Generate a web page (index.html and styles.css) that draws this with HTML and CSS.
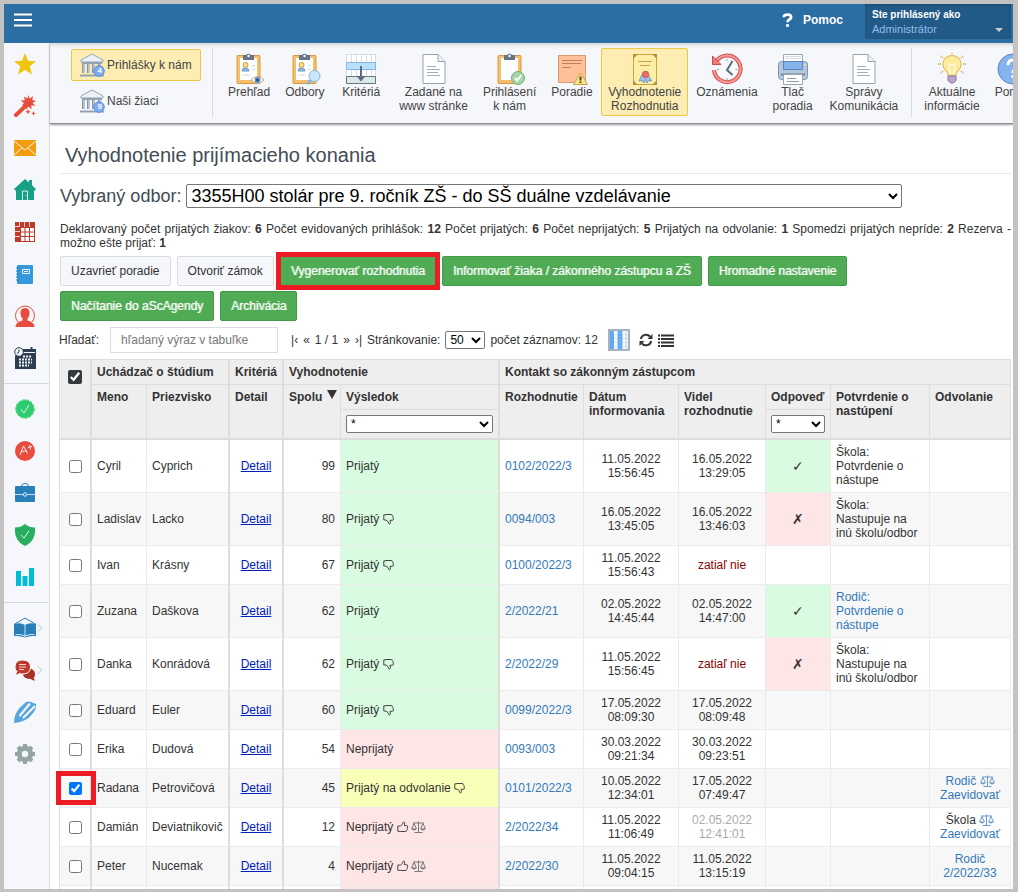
FILE: index.html
```html
<!DOCTYPE html>
<html lang="sk">
<head>
<meta charset="utf-8">
<title>Vyhodnotenie prijímacieho konania</title>
<link rel="stylesheet" href="styles.css">
</head>
<body>
<svg class="defs" aria-hidden="true">
  <symbol id="bank" viewBox="0 0 26 24">
    <path d="M2 7 13 1l11 6v2H2z" fill="#eef2f6" stroke="#93a3b4"/>
    <path d="M3 10h20" stroke="#93a3b4" stroke-width="2"/>
    <path d="M4.500 11v9M9.500 11v9M14.500 11v9M20.500 11v9" stroke="#8598ab" stroke-width="3"/>
    <path d="M5 11v9M10 11v9M15 11v9M21 11v9" stroke="#e9eef3"/>
    <path d="M1 22.500h24" stroke="#93a3b4" stroke-width="2"/>
    <circle cx="20" cy="18" r="5.300" fill="#7daaf0" stroke="#5d8fd8"/>
  </symbol>
  <symbol id="doc" viewBox="0 0 32 32">
    <path d="M5 1.500h15l7 7v22H5z" fill="#fff" stroke="#94a3b3"/>
    <path d="M20 1.500v7h7" fill="#eef2f6" stroke="#94a3b3"/>
    <path d="M9 13.500h9M9 16.500h13M9 19.500h11M9 22.500h13" stroke="#a3acbb"/>
  </symbol>
  <symbol id="clip" viewBox="0 0 32 32">
    <rect x="4" y="2.500" width="23" height="28" rx="1" fill="#f5c06c" stroke="#d9973f"/>
    <path d="M7 5h17v22H7z" fill="#fff"/>
    <path d="M10 2h3a3 3 0 0 1 5 0h3v5H10z" fill="#667587"/>
    <circle cx="15.500" cy="3" r="1.200" fill="#fff"/>
  </symbol>
  <symbol id="person" viewBox="0 0 32 32">
    <circle cx="12.500" cy="12" r="2.500" fill="#fbe08b" stroke="#c99d3e"/>
    <path d="M9 18q0-3 3.500-3t3.500 3z" fill="#8fb9e6" stroke="#6f97c4"/>
    <path d="M19 12.500h3M19 16.500h3M9 22h8" stroke="#d5dde5"/>
  </symbol>
  <symbol id="down" viewBox="0 0 12 12">
    <path d="M3 1.500h5.200q1.300 0 1.200 1.200.9.500.5 1.500.9.700.3 1.700.7 1.300-.9 1.400H7q.7 2.200.2 3.200-.8.900-1.400.1Q5.700 8.500 3 7H.8V1.800H3z" fill="none" stroke="#444"/>
  </symbol>
  <symbol id="up" viewBox="0 0 12 12">
    <path d="M3.500 10.500h5q1.300 0 1.200-1.200.9-.5.5-1.500.9-.7.3-1.700.7-1.300-.9-1.400H7.300q.7-2.200.2-3.200-.8-.9-1.400-.1Q6 3.500 3.500 5H.8v5.300h2.700z" fill="none" stroke="#444"/>
  </symbol>
  <symbol id="scales" viewBox="0 0 15 12">
    <path d="M2 2h11M7.500.500v10.500M3.500 11.500h8M.500 8 3 2.500 5.500 8M9.500 8 12 2.500 14.500 8" fill="none" stroke="currentColor"/>
    <path d="M.300 7.500h5.400Q5 9.500 3 9.500T.300 7.500zM9.300 7.500h5.400Q14 9.500 12 9.500T9.300 7.500z" fill="currentColor"/>
  </symbol>
</svg>

<div class="app">
  <header class="topbar">
    <button class="menu" type="button" aria-label="Menu"><svg width="18" height="14" viewBox="0 0 18 14"><path d="M0 1.500h18M0 7h18M0 12.500h18" stroke="#fff" stroke-width="2"/></svg></button>
    <a class="help" href="#"><svg width="11" height="14" viewBox="0 0 12 15"><path d="M2 4.500Q2 1.500 6 1.500t4 3Q10 6 8 7T6 10" fill="none" stroke="#fff" stroke-width="3"/><path d="M4.500 12h3v3h-3z" fill="#fff"/></svg>Pomoc</a>
    <button class="account" type="button"><strong>Ste prihlásený ako</strong><span>Administrátor</span><i class="caret"></i></button>
  </header>

  <div class="body">
    <nav class="side" aria-label="Moduly">
      <a href="#" aria-label="Obľúbené"><svg viewBox="0 0 22 22"><path d="M11 0l3 7.800 8 .5-6.200 5 2.200 8.200-7-4.600-7 4.600 2.200-8.200L0 8.300l8-.5z" fill="#f1c40f"/></svg></a>
      <a href="#" aria-label="Sprievodca"><svg viewBox="0 0 22 22"><path d="M2 20 12 10.500" stroke="#e74c3c" stroke-width="4" stroke-linecap="round"/><path d="M14.500 0l1.200 3.800L19 1l-.7 4 3.700 1-3.500 2 3 3-4.200-.8.200 4.300-3-3-2.500 3-.2-4.200-4 .2L10 8 6.500 5.500l4.300-.2L10 1.500l3.300 2z" fill="#e74c3c"/><path d="m14 14 .8 2 2 .8-2 .8-.8 2-.8-2-2-.8 2-.8zM19.500 16l.6 1.700 1.700.7-1.700.7-.6 1.700-.6-1.700-1.700-.7 1.700-.7z" fill="#e74c3c"/></svg></a>
      <a href="#" aria-label="Správy"><svg viewBox="0 0 22 22"><path d="M0 3h22v16H0z" fill="#f39c12"/><path d="M0 4l11 9 11-9M0 18l8-7M22 18l-8-7" fill="none" stroke="#fff6e0"/></svg></a>
      <a href="#" aria-label="Domov"><svg viewBox="0 0 22 22"><path d="M0 10 11 0l4 3.600V1h3v5.300L22 10l-1 1.500h-1V21H2V11.500H1z" fill="#16a085"/><path d="M8.500 21v-9h5v9M12 16v1" fill="none" stroke="#d9f2ec"/></svg></a>
      <a href="#" aria-label="Rozvrh"><svg viewBox="0 0 22 22"><path d="M1 1h20v20H1z" fill="#c0392b"/><path d="M6 6h15v15H6z" fill="#fff"/><path d="M6 6.500h15M6 11h15M6 15.500h15M6 20.500h15M6.500 6v15M11 6v15M15.500 6v15M20.500 6v15" stroke="#c0392b"/><path d="M5.500 1v5M10.500 1v5M15.500 1v5M1 5.500h5M1 10.500h5M1 15.500h5" stroke="#f1c8c4"/></svg></a>
      <a href="#" aria-label="Triedna kniha"><svg viewBox="0 0 22 22"><rect x="3" y="2" width="16" height="19" rx="1" fill="#3498db"/><path d="M2 5h3M2 8h3M2 11h3M2 14h3M2 17h3" stroke="#2980b9"/><path d="M8.500 6.500h7v4h-7zM10 8.500h4" fill="none" stroke="#eaf5fc"/></svg></a>
      <a href="#" aria-label="Používatelia"><svg viewBox="0 0 22 22"><path d="M4 17A9.500 9.500 0 1 1 18 17" fill="none" stroke="#e74c3c"/><path d="M11 3q5 0 4.500 6-.5 3-2 4.500v2q7 1.500 7 6.500h-19q0-5 7-6.500v-2Q7 12 6.500 9 6 3 11 3z" fill="#e74c3c"/></svg></a>
      <a href="#" aria-label="Kalendár"><svg viewBox="0 0 22 22"><path d="M8 2h14v20H1V9z" fill="#2c3e50"/><path d="M9 5.500h12" stroke="#f5f7fa"/><path d="M17.500 0v4" stroke="#2c3e50" stroke-width="2"/><circle cx="5" cy="5" r="4.300" fill="#f5f7fa" stroke="#2c3e50"/><path d="M5 2.500V5L3 6.500" fill="none" stroke="#2c3e50"/><path d="M9 9.500h9M5 12.500h13M5 15.500h13M5 18.500h10" stroke="#eef1f4" stroke-width="2" stroke-dasharray="2 1"/></svg></a>
      <hr>
      <a href="#" aria-label="Dochádzka"><svg viewBox="0 0 22 22"><circle cx="11" cy="11" r="9" fill="#2ecc71"/><circle cx="11" cy="11" r="9.200" fill="none" stroke="#2ecc71" stroke-dasharray="3 1"/><path d="m7 11.500 3 3.500 5-8" fill="none" stroke="#eafbf1"/></svg></a>
      <a href="#" aria-label="Známky"><svg viewBox="0 0 22 22"><circle cx="11" cy="11" r="10" fill="#e74c3c"/><path d="m6 15 3.500-9 4 7.500M7 12l6-1.500M14 7.500l4-1M15.500 5l1 4.500" fill="none" stroke="#fde8e5"/></svg></a>
      <a href="#" aria-label="Agenda"><svg viewBox="0 0 22 22"><path d="M7.500 4q0-2.500 3.500-2.500T14.500 4" fill="none" stroke="#2980b9"/><rect x="1" y="4" width="20" height="16" rx="1" fill="#2980b9"/><path d="M1 12.500h8M13 12.500h8" stroke="#c8dff0"/><circle cx="11" cy="12.500" r="1.700" fill="none" stroke="#e5f0f8"/></svg></a>
      <a href="#" aria-label="Bezpečnosť"><svg viewBox="0 0 22 22"><path d="M11 0q4 3.500 10 3.500Q22 17 11 22 0 17 1 3.500 7 3.500 11 0z" fill="#27ae60"/><path d="m7 11 3 3 5-7" fill="none" stroke="#e5f7ec"/></svg></a>
      <a href="#" aria-label="Štatistiky"><svg viewBox="0 0 22 22"><path d="M2 5h5v15H2zM8.500 10h5v10h-5zM15 2h5v18h-5z" fill="#00bcd4"/></svg></a>
      <hr>
      <a href="#" aria-label="Knižnica"><svg viewBox="0 0 22 22"><path d="M0 7.500 11 1l11 6.500" fill="none" stroke="#2980b9"/><path d="M0 7q7-2 11 1 4-3 11-1v12q-7-.5-11 1.500Q7 18.500 0 19z" fill="#2980b9"/><path d="M11 8v12.500M1.500 17.500q6-.5 9.500 1.500 3.500-2 9.500-1.500" fill="none" stroke="#cfe3f2"/></svg><span class="more"></span></a>
      <a href="#" aria-label="Komunikácia"><svg viewBox="0 0 22 22"><path d="M14 9q7 1 7 6 0 3-1.500 4l1.500 2.500q-3 0-4-1.500-7 0-8-4z" fill="#a93226"/><path d="M8.500 1q8 0 8 7t-8 7q-1.500 0-3-.5-1.500 1.500-4.500 1.500l2-3.500Q1 11 1 8q0-7 7.500-7z" fill="#c0392b" stroke="#f5f7fa"/><path d="M5 5.500h7M5 8h7M5 10.500h5" stroke="#f4d5d2"/></svg><span class="more"></span></a>
      <a href="#" aria-label="Poznámky"><svg viewBox="0 0 22 22"><path d="M0 22q0-9 6-15.500L12 1q3-1 5 0l5 2q.5 4-2 8l-5.500 6Q8 21.500 0 22z" fill="#57a6de"/><path d="M5.500 15 16 2.500M9 17 21 5" stroke="#f5f7fa" stroke-width="2"/></svg></a>
      <a href="#" aria-label="Nastavenia"><svg viewBox="0 0 22 22"><circle cx="11" cy="11" r="5.700" fill="none" stroke="#95a5a6" stroke-width="5"/><path d="M11 1v4M11 17v4M1 11h4M17 11h4M4 4l3 3M15 15l3 3M4 18l3-3M15 7l3-3" stroke="#95a5a6" stroke-width="4"/></svg></a>
    </nav>

    <div class="content">
      <div class="ribbon">
        <div class="views">
          <button type="button" class="view on"><span class="pic"><svg width="26" height="24"><use href="#bank"/></svg><b>4</b></span>Prihlášky k nám</button>
          <button type="button" class="view"><span class="pic"><svg width="26" height="24"><use href="#bank"/></svg><b>9</b></span>Naši žiaci</button>
        </div>
        <div class="tools">
          <button type="button"><svg viewBox="0 0 32 32"><use href="#clip"/><use href="#person"/><path d="M18 27q6.500-7 13 0-6.500 7-13 0z" fill="#fff" stroke="#c8a06b"/><circle cx="24.500" cy="27" r="3" fill="#5b8ed0"/><circle cx="24.500" cy="27" r="1.200" fill="#26405f"/></svg>Prehľad</button>
          <button type="button"><svg viewBox="0 0 32 32"><use href="#clip"/><use href="#person"/><path d="m18 31 4-4" stroke="#8db4d2" stroke-width="3"/><circle cx="25.500" cy="23" r="5.500" fill="#c9e8fb" stroke="#8db4d2"/></svg>Odbory</button>
          <button type="button"><svg viewBox="0 0 32 32"><path d="M1 1h30v30H1z" fill="#fff"/><path d="M1 1.500h30M1 16h30M1.500 1v30M6.500 1v30M11.500 1v30M16.500 1v30M21.500 1v30M26.500 1v30M30.500 1v30" stroke="#d5dce3"/><path d="M1.500 9.500h29v7h-29z" fill="#b9e0fc" stroke="#84b5dc"/><path d="M1.500 23.500h29v7h-29z" fill="#dbe8e8" stroke="#667587"/><path d="M16 13v12" stroke="#5c6c80" stroke-width="2"/><path d="M11.500 23h9L16 28.500z" fill="#5c6c80"/></svg>Kritériá</button>
          <button type="button"><svg viewBox="0 0 32 32"><use href="#doc"/></svg>Zadané na<br>www stránke</button>
          <button type="button"><svg viewBox="0 0 32 32"><use href="#clip"/><circle cx="24" cy="25" r="6.500" fill="#a5d6a7" stroke="#6fae78"/><path d="m21 25 2.200 2.500L27.500 22" fill="none" stroke="#fff" stroke-width="2"/></svg>Prihlásení<br>k nám</button>
          <button type="button"><svg viewBox="0 0 32 32"><path d="M2.500 2.500h27v27h-27z" fill="#ffbf99" stroke="#dc9a73"/><path d="M6 7.500h20M6 10.500h19M6 14.500h9" stroke="#c08060"/><path d="m24.500 20 7 11.500h-14z" fill="#fbe489" stroke="#c9a545"/><path d="M24.500 23.500v4M24.500 28.500V30" stroke="#45433f" stroke-width="2"/></svg>Poradie</button>
          <button type="button" class="on"><svg viewBox="0 0 32 32"><path d="M4.500 1.500h23v30h-23z" fill="#fdeea6" stroke="#c9a545"/><path d="M4 1h5L4 6zM28 1h-5l5 5zM4 32h5l-5-5zM28 32h-5l5-5z" fill="#b6923b"/><path d="M9 8.500h14M11 12.500h10" stroke="#c4a44a"/><path d="m13 22-3 6 3-.5L15 30l1.500-4 1.500 4 1.500-2.500 3 .5-3-6z" fill="#9fc5ec" stroke="#6e9ac8"/><circle cx="16.500" cy="21.500" r="3.200" fill="#ec6f6b" stroke="#c75551"/></svg>Vyhodnotenie<br>Rozhodnutia</button>
          <button type="button"><svg viewBox="0 0 32 32"><circle cx="16" cy="16.500" r="12.500" fill="#f7f9fb"/><path d="M5.500 8A13.300 13.300 0 1 1 3 17" fill="none" stroke="#d0524f" stroke-width="4"/><path d="M5.500 8A13.300 13.300 0 1 1 3 17" fill="none" stroke="#f59a98" stroke-width="2"/><path d="M1.500 3v8.500H10z" fill="#f07b79" stroke="#c94f4c"/><path d="M21.500 8 16 17l5.500 5" fill="none" stroke="#5c6c80" stroke-width="2"/><path d="M16 6v2M16 25v2M6 16.500h2M24.500 16.500h2" stroke="#9aa7b4"/></svg>Oznámenia</button>
          <button type="button"><svg viewBox="0 0 32 32"><path d="M6.500 1.500h19v8h-19z" fill="#fff" stroke="#9aa5b2"/><path d="M8 3.500h16M8 5.500h16" stroke="#d3dae1"/><rect x="1.500" y="8.500" width="29" height="18" rx="3" fill="#b5c7dc" stroke="#7f95ae"/><path d="M6.500 8.500h19v8h-19z" fill="#84b3ee" stroke="#5a85bd"/><path d="M4 21.500h24" stroke="#6c7e93" stroke-width="2"/><path d="M6.500 21.500h19v10h-19z" fill="#fff" stroke="#9aa5b2"/><path d="M10 25.500h9M10 28.500h12" stroke="#8d98a5"/><circle cx="27.500" cy="12" r="1" fill="#f5dc84"/></svg>Tlač<br>poradia</button>
          <button type="button"><svg viewBox="0 0 32 32"><use href="#doc"/></svg>Správy<br>Komunikácia</button>
        </div>
        <div class="tools last">
          <button type="button"><svg viewBox="0 0 32 32"><path d="M16 0v2M5 3l2 2M27 3l-2 2M2 11h3M30 11h-3M5 20l2-2M27 20l-2-2" stroke="#d6b25c" stroke-width="2" stroke-dasharray="1 1"/><path d="M16 2.500q9 .5 9 9 0 4-3 6.500-2 2-2 4.500h-8q0-2.500-2-4.500-3-2.500-3-6.500 0-8.500 9-9z" fill="#ffeb9c" stroke="#dcb54c"/><path d="M14.500 21 13 13q-.5-2 1-2t2 2q.5-2 2-2t1 2l-1.500 8" fill="none" stroke="#fff"/><path d="M12 23h8v4.500L17.500 30h-3L12 27.500z" fill="#bca3cf" stroke="#8f75a6"/></svg>Aktuálne<br>informácie</button>
          <button type="button"><svg viewBox="0 0 32 32"><circle cx="16" cy="16" r="15" fill="#84b3ee" stroke="#5a85bd"/><path d="M11 12q0-5 5-5t5 4.500q0 2.500-2.500 4T16 20M16 22v3" fill="none" stroke="#fff" stroke-width="3"/></svg>Pomoc</button>
        </div>
      </div>

      <main>
        <h1>Vyhodnotenie prijímacieho konania</h1>
        <div class="field">
          <label for="odbor">Vybraný odbor:</label>
          <select id="odbor"><option>3355H00 stolár pre 9. ročník ZŠ - do SŠ duálne vzdelávanie</option></select>
        </div>
        <p class="summary">Deklarovaný počet prijatých žiakov: <b>6</b> Počet evidovaných prihlášok: <b>12</b> Počet prijatých: <b>6</b> Počet neprijatých: <b>5</b> Prijatých na odvolanie: <b>1</b> Spomedzi prijatých nepríde: <b>2</b> Rezerva - možno ešte prijať: <b>1</b></p>
        <div class="actions">
          <button type="button">Uzavrieť poradie</button>
          <button type="button">Otvoriť zámok</button>
          <button type="button" class="go marked">Vygenerovať rozhodnutia</button>
          <button type="button" class="go">Informovať žiaka / zákonného zástupcu a ZŠ</button>
          <button type="button" class="go">Hromadné nastavenie</button>
          <button type="button" class="go">Načítanie do aScAgendy</button>
          <button type="button" class="go">Archivácia</button>
        </div>
        <div class="search">
          <label for="q">Hľadať:</label>
          <input id="q" type="text" placeholder="hľadaný výraz v tabuľke">
          <span class="pager"><a href="#">|‹</a><a href="#">«</a><span>1 / 1</span><a href="#">»</a><a href="#">›|</a></span>
          <label for="size">Stránkovanie:</label>
          <select id="size"><option>50</option></select>
          <span>počet záznamov: 12</span>
          <button type="button" class="cols" aria-label="Stĺpce"><svg width="22" height="22" viewBox="0 0 22 22"><path d="M1 1h20v20H1z" fill="#f7fafc" stroke="#a5b2bf" stroke-width="2"/><path d="M6 5.500h14M6 9.500h14M6 13.500h14M6 17.500h14" stroke="#d5e5f2"/><path d="M2 2h4v18H2zM10 2h4v18h-4z" fill="#5fa9f5"/><path d="M12 4v14" stroke="#a9d0f8" stroke-dasharray="1 2"/><path d="M9.500 2v18M14.500 2v18M18 2v18" stroke="#bcd3e8"/></svg></button>
          <button type="button" aria-label="Obnoviť"><svg width="14" height="14" viewBox="0 0 14 14"><path d="M1.800 6A5.300 5.300 0 0 1 11 3.500M12.200 8A5.300 5.300 0 0 1 3 10.500" fill="none" stroke="#333" stroke-width="2"/><path d="M13.500 1v5h-5zM.5 13V8h5z" fill="#333"/></svg></button>
          <button type="button" aria-label="Zoznam"><svg width="16" height="13" viewBox="0 0 16 13"><path d="M0 1.500h2M3 1.500h13M0 5h2M3 5h13M0 8.500h2M3 8.500h13M0 12h2M3 12h13" stroke="#333" stroke-width="2"/></svg></button>
        </div>

        <table>
          <colgroup><col class="c-check"><col class="c-first"><col class="c-last"><col class="c-detail"><col class="c-sum"><col class="c-result"><col class="c-no"><col class="c-date"><col class="c-seen"><col class="c-answer"><col class="c-confirm"><col></colgroup>
          <thead>
            <tr><th rowspan="3" class="sel g"><input type="checkbox" checked aria-label="Označiť všetkých"></th><th colspan="2" class="g">Uchádzač o štúdium</th><th class="g">Kritériá</th><th colspan="2" class="g">Vyhodnotenie</th><th colspan="6">Kontakt so zákonným zástupcom</th></tr>
            <tr><th rowspan="2">Meno</th><th rowspan="2" class="g">Priezvisko</th><th rowspan="2" class="g">Detail</th><th rowspan="2"><span class="sorted">Spolu <svg width="10" height="9" viewBox="0 0 10 9"><path d="M0 0h10L5 9z" fill="#333"/></svg></span></th><th class="g">Výsledok</th><th rowspan="2">Rozhodnutie</th><th rowspan="2">Dátum informovania</th><th rowspan="2">Videl rozhodnutie</th><th>Odpoveď</th><th rowspan="2">Potvrdenie o nastúpení</th><th rowspan="2">Odvolanie</th></tr>
            <tr><th class="filter g"><select aria-label="Výsledok"><option>*</option></select></th><th class="filter"><select aria-label="Odpoveď"><option>*</option></select></th></tr>
          </thead>
          <tbody>
            <tr><td class="sel g"><input type="checkbox" aria-label="Cyril Cyprich"></td><td>Cyril</td><td class="g">Cyprich</td><td class="mid g"><a class="detail" href="#">Detail</a></td><td class="num">99</td><td class="ok g">Prijatý</td><td><a href="#">0102/2022/3</a></td><td class="mid">11.05.2022 15:56:45</td><td class="mid">16.05.2022 13:29:05</td><td class="mid ok">✓</td><td>Škola: Potvrdenie o nástupe</td><td></td></tr>
            <tr><td class="sel g"><input type="checkbox" aria-label="Ladislav Lacko"></td><td>Ladislav</td><td class="g">Lacko</td><td class="mid g"><a class="detail" href="#">Detail</a></td><td class="num">80</td><td class="ok g">Prijatý <svg class="th"><use href="#down"/></svg></td><td><a href="#">0094/003</a></td><td class="mid">16.05.2022 13:45:05</td><td class="mid">16.05.2022 13:46:03</td><td class="mid no">✗</td><td>Škola: Nastupuje na inú školu/odbor</td><td></td></tr>
            <tr><td class="sel g"><input type="checkbox" aria-label="Ivan Krásny"></td><td>Ivan</td><td class="g">Krásny</td><td class="mid g"><a class="detail" href="#">Detail</a></td><td class="num">67</td><td class="ok g">Prijatý <svg class="th"><use href="#down"/></svg></td><td><a href="#">0100/2022/3</a></td><td class="mid">11.05.2022 15:56:43</td><td class="mid late">zatiaľ nie</td><td></td><td></td><td></td></tr>
            <tr><td class="sel g"><input type="checkbox" aria-label="Zuzana Daškova"></td><td>Zuzana</td><td class="g">Daškova</td><td class="mid g"><a class="detail" href="#">Detail</a></td><td class="num">62</td><td class="ok g">Prijatý</td><td><a href="#">2/2022/21</a></td><td class="mid">02.05.2022 14:45:44</td><td class="mid">02.05.2022 14:47:00</td><td class="mid ok">✓</td><td><a href="#">Rodič: Potvrdenie o nástupe</a></td><td></td></tr>
            <tr><td class="sel g"><input type="checkbox" aria-label="Danka Konrádová"></td><td>Danka</td><td class="g">Konrádová</td><td class="mid g"><a class="detail" href="#">Detail</a></td><td class="num">62</td><td class="ok g">Prijatý <svg class="th"><use href="#down"/></svg></td><td><a href="#">2/2022/29</a></td><td class="mid">11.05.2022 15:56:45</td><td class="mid late">zatiaľ nie</td><td class="mid no">✗</td><td>Škola: Nastupuje na inú školu/odbor</td><td></td></tr>
            <tr><td class="sel g"><input type="checkbox" aria-label="Eduard Euler"></td><td>Eduard</td><td class="g">Euler</td><td class="mid g"><a class="detail" href="#">Detail</a></td><td class="num">60</td><td class="ok g">Prijatý <svg class="th"><use href="#down"/></svg></td><td><a href="#">0099/2022/3</a></td><td class="mid">17.05.2022 08:09:30</td><td class="mid">17.05.2022 08:09:48</td><td></td><td></td><td></td></tr>
            <tr><td class="sel g"><input type="checkbox" aria-label="Erika Dudová"></td><td>Erika</td><td class="g">Dudová</td><td class="mid g"><a class="detail" href="#">Detail</a></td><td class="num">54</td><td class="no g">Neprijatý</td><td><a href="#">0093/003</a></td><td class="mid">30.03.2022 09:21:34</td><td class="mid">30.03.2022 09:23:51</td><td></td><td></td><td></td></tr>
            <tr><td class="sel g picked"><input type="checkbox" checked aria-label="Radana Petrovičová"></td><td>Radana</td><td class="g">Petrovičová</td><td class="mid g"><a class="detail" href="#">Detail</a></td><td class="num">45</td><td class="appeal g">Prijatý na odvolanie <svg class="th"><use href="#down"/></svg></td><td><a href="#">0101/2022/3</a></td><td class="mid">10.05.2022 12:34:01</td><td class="mid">17.05.2022 07:49:47</td><td></td><td></td><td class="mid"><a href="#">Rodič <svg class="sc"><use href="#scales"/></svg><br>Zaevidovať</a></td></tr>
            <tr><td class="sel g"><input type="checkbox" aria-label="Damián Deviatnikovič"></td><td>Damián</td><td class="g">Deviatnikovič</td><td class="mid g"><a class="detail" href="#">Detail</a></td><td class="num">12</td><td class="no g">Neprijatý <svg class="th"><use href="#up"/></svg> <svg class="sc dark"><use href="#scales"/></svg></td><td><a href="#">2/2022/34</a></td><td class="mid">11.05.2022 11:06:49</td><td class="mid faded">02.05.2022 12:41:01</td><td></td><td></td><td class="mid">Škola <svg class="sc"><use href="#scales"/></svg><br><a href="#">Zaevidovať</a></td></tr>
            <tr><td class="sel g"><input type="checkbox" aria-label="Peter Nucemak"></td><td>Peter</td><td class="g">Nucemak</td><td class="mid g"><a class="detail" href="#">Detail</a></td><td class="num">4</td><td class="no g">Neprijatý <svg class="th"><use href="#up"/></svg> <svg class="sc dark"><use href="#scales"/></svg></td><td><a href="#">2/2022/30</a></td><td class="mid">11.05.2022 09:04:15</td><td class="mid">11.05.2022 13:15:19</td><td></td><td></td><td class="mid"><a href="#">Rodič<br>2/2022/33</a></td></tr>
            <tr><td class="g sel"></td><td></td><td class="g"></td><td class="g"></td><td></td><td class="no g"></td><td></td><td></td><td></td><td></td><td></td><td></td></tr>
          </tbody>
        </table>
      </main>
    </div>
  </div>
</div>
</body>
</html>
```
FILE: styles.css
```css
* { box-sizing: border-box; }
body { margin: 0; background: #fff; color: #333; font: 12px/14px "Liberation Sans", Arial, sans-serif; }
button, input, select { font: inherit; color: inherit; }
button { cursor: pointer; }
a { color: #337ab7; text-decoration: none; }
.defs { display: none; }

.app { display: flex; flex-direction: column; height: 100vh; overflow: hidden; border: solid #c3c2c1; border-width: 4px 5px 3px 4px; }

.topbar { display: flex; align-items: flex-start; flex: none; height: 39px; padding-right: 2px; background: #2b6ea3; color: #fff; }
.menu { padding: 9px 10px; border: 0; background: none; line-height: 0; }
.help { display: flex; align-items: center; gap: 10px; margin: 9px 22px 0 auto; color: #fff; font-weight: bold; }
.account { position: relative; width: 146px; height: 35px; padding: 0 7px; border: 0; border-radius: 0 0 2px 2px; background: #225a87; box-shadow: inset 0 1px 3px #1b4a70; color: #fff; font-size: 10px; line-height: 14px; text-align: left; }
.account strong, .account span { display: block; }
.account span { color: #93bdec; font-size: 11px; }
.caret { position: absolute; right: 8px; bottom: 7px; border: 4px solid transparent; border-top-color: #ccc; border-bottom: 0; }

.body { display: flex; flex: 1; min-height: 0; }
.side { flex: none; width: 46px; border-right: 1px solid #dcdee2; background: #f5f7fa; }
.side a { position: relative; display: flex; align-items: center; justify-content: center; height: 42px; padding-right: 3px; }
.side svg { width: 22px; height: 22px; }
.side hr { height: 1px; margin: 4px 0; border: 0; background: #d5d8dc; }
.more { position: absolute; right: 8px; width: 6px; height: 6px; border: solid #cfd3d8; border-width: 1px 1px 0 0; transform: rotate(45deg); }

.content { flex: 1; min-width: 0; display: flex; flex-direction: column; }
.ribbon { display: flex; flex: none; height: 81px; padding: 5px 0 6px 21px; overflow: hidden; border-bottom: 1px solid #8b9099; background: #f5f7fa; box-shadow: inset 0 3px 4px -2px #c4c8ce, 0 1px 2px #999; }
.ribbon button { border: 1px solid transparent; border-radius: 2px; background: none; color: #444; }
.ribbon button.on { border-color: #eec848; background: #fdedb2; }
.views { display: flex; flex: none; flex-direction: column; gap: 4px; padding: 1px 11px 0 0; }
.view { display: flex; align-items: center; gap: 2px; width: 130px; height: 32px; padding: 0 7px; }
.pic { position: relative; display: flex; }
.pic b { position: absolute; right: 3px; bottom: 1px; color: #fff; font-size: 8px; line-height: 10px; }
.tools { display: flex; flex: none; align-items: flex-start; gap: 1px; padding-left: 8px; border-left: 1px solid #d8dade; }
.tools.last { margin-left: 6px; padding-left: 5px; }
.tools button { display: flex; flex: none; flex-wrap: wrap; flex-direction: column; align-items: center; justify-content: flex-start; min-width: 56px; height: 68px; padding: 4px 6px 2px; text-align: center; white-space: nowrap; }
.tools button { display: grid; align-content: start; justify-items: center; }
.tools button br { display: block; }
.tools svg { width: 32px; height: 32px; }

main { flex: 1; min-height: 0; overflow: hidden; padding: 0 2px 0 10px; }
h1 { margin: 0 0 10px; padding: 19px 5px 6px; border-bottom: 1px solid #e8e8e8; color: #434b57; font-size: 20px; font-weight: normal; line-height: 24px; }
.field { display: flex; align-items: center; gap: 5px; color: #434b57; font-size: 18px; line-height: 20px; }
.field select { width: 716px; max-width: 100%; height: 24px; border: 1px solid #767676; border-radius: 2px; background: #fff; color: #000; }
.summary { margin: 14px 0 6px; text-align: justify; }
.actions { display: flex; flex-wrap: wrap; }
.actions button { height: 30px; margin: 0 6px 5px 0; padding: 0 10px; border: 1px solid #d9dce1; border-radius: 2px; background: #f5f7fa; }
.actions .go { border-color: #43984a; background: #50ab55; color: #fff; text-shadow: 1px 0 0 rgba(255, 255, 255, .5); }
.actions .marked { border-radius: 0; outline: 5px solid #ed1c24; outline-offset: -1px; }

.search { display: flex; align-items: center; gap: 5px; margin: 1px 0 6px -1px; }
.search input { width: 168px; height: 26px; margin: 0 8px 0 6px; padding: 0 10px; border: 1px solid #d9dce1; }
.search input::placeholder { color: #777; }
.search select { width: 40px; height: 18px; padding: 0; border: 1px solid #767676; border-radius: 2px; background: #fff; color: #000; }
.search button { padding: 0; border: 0; background: none; line-height: 0; }
.search .cols { margin: 0 4px 0 5px; }
.pager { display: flex; gap: 5px; }
.pager a { color: inherit; }

table { width: calc(100% + 1px); margin-left: -1px; border-spacing: 0; border-top: 1px solid #ddd; table-layout: fixed; }
.c-check { width: 33px; }
.c-first { width: 55px; }
.c-last { width: 83px; }
.c-detail { width: 54px; }
.c-sum { width: 57px; }
.c-result { width: 159px; }
.c-no { width: 84px; }
.c-date { width: 95px; }
.c-seen { width: 87px; }
.c-answer { width: 65px; }
.c-confirm { width: 99px; }
th, td { padding: 5px; border: solid #ebebeb; border-width: 0 1px 1px 0; }
th { border-color: #ddd; background: #eee; text-align: left; vertical-align: top; }
.g { border-right: 2px solid #ddd; white-space: nowrap; }
tr > .sel { border-left: 1px solid #ddd; text-align: center; }
th[rowspan], .filter { border-bottom: 2px solid #ddd; }
.sel input { display: block; width: 13px; height: 13px; margin: 1px auto 0; }
th.sel input { width: 14px; height: 14px; margin-top: 5px; accent-color: #34383f; }
.filter select { display: block; width: 100%; height: 18px; padding: 0; border: 1px solid #767676; border-radius: 2px; background: #fff; color: #000; font-weight: normal; }
.sorted { display: flex; justify-content: space-between; margin-right: -2px; }
tbody tr:nth-child(even) { background: #f7f7f7; }
td { vertical-align: middle; }
td:first-child, td:nth-child(2) { white-space: nowrap; }
.mid { text-align: center; }
.num { text-align: right; }
.ok { background: #d9fbdf; }
.no { background: #ffe6e6; }
.mid.ok, .mid.no { font-size: 14px; }
.appeal { background: #faffb8; }
.late { color: #8b0000; }
.faded { color: #aaa; }
.detail { color: #0022bb; text-decoration: underline; }
.picked { position: relative; }
.picked::after { content: ""; position: absolute; inset: 2px -6px 2px -4px; border: 5px solid #ed1c24; }
.th { width: 12px; height: 12px; vertical-align: -2px; }
.sc { width: 15px; height: 12px; color: #6d9ccb; vertical-align: -2px; }
.sc.dark { margin-left: -1px; color: #777; }
```
